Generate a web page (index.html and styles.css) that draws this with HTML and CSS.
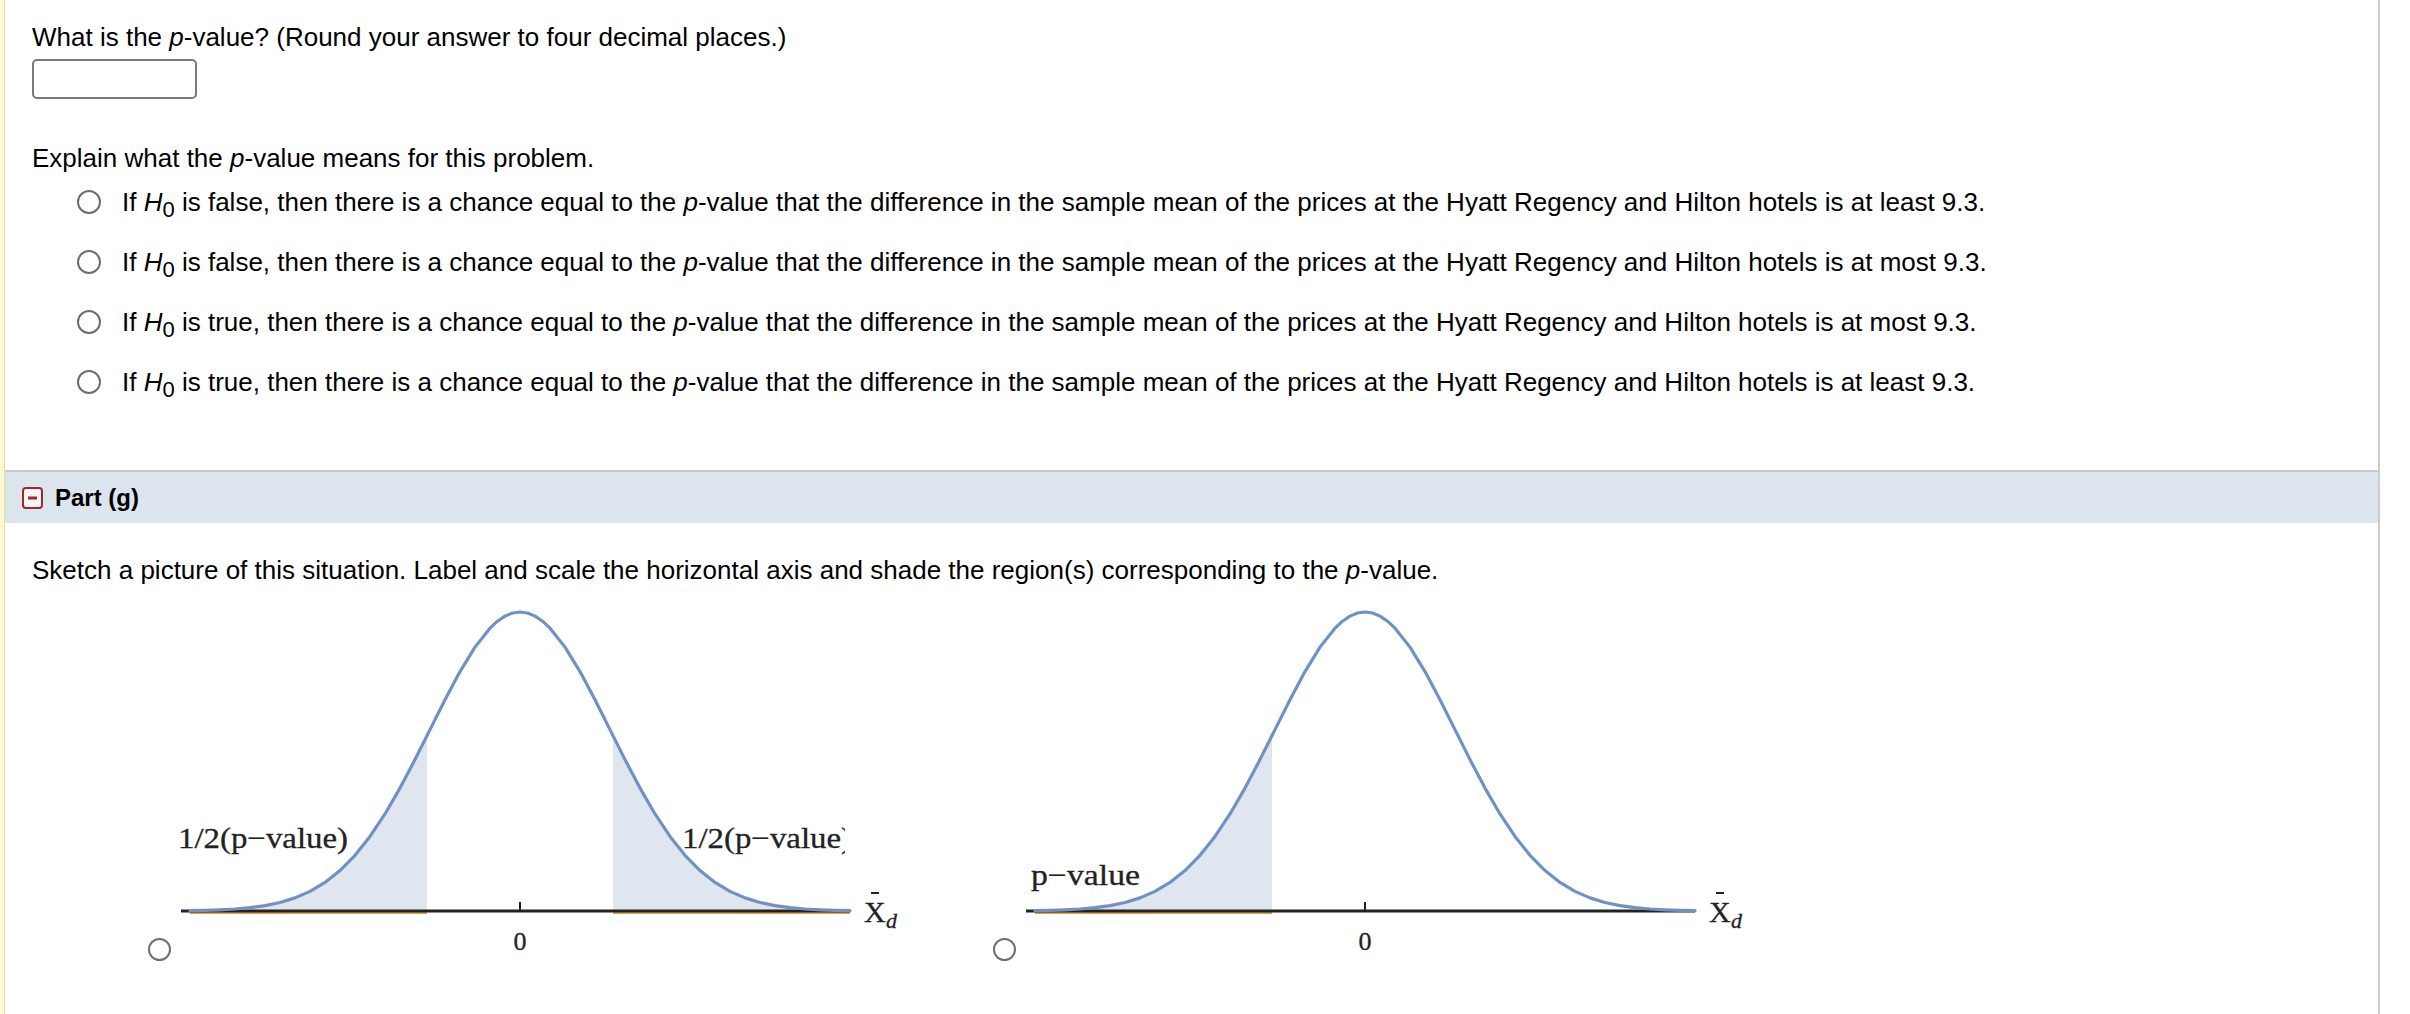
FILE: index.html
```html
<!DOCTYPE html>
<html>
<head>
<meta charset="utf-8">
<title>Part (g)</title>
<link rel="stylesheet" href="styles.css">
</head>
<body>
<div class="page">
  <div class="strip"></div>
  <div class="main">
    <div class="section">
      <p class="line">What is the <i>p</i>-value? (Round your answer to four decimal places.)</p>
      <div class="answer-box"></div>
      <p class="line explain">Explain what the <i>p</i>-value means for this problem.</p>
      <ul class="options">
        <li class="option"><span class="radio"></span><span>If <i>H</i><sub>0</sub> is false, then there is a chance equal to the <i>p</i>-value that the difference in the sample mean of the prices at the Hyatt Regency and Hilton hotels is at least 9.3.</span></li>
        <li class="option"><span class="radio"></span><span>If <i>H</i><sub>0</sub> is false, then there is a chance equal to the <i>p</i>-value that the difference in the sample mean of the prices at the Hyatt Regency and Hilton hotels is at most 9.3.</span></li>
        <li class="option"><span class="radio"></span><span>If <i>H</i><sub>0</sub> is true, then there is a chance equal to the <i>p</i>-value that the difference in the sample mean of the prices at the Hyatt Regency and Hilton hotels is at most 9.3.</span></li>
        <li class="option"><span class="radio"></span><span>If <i>H</i><sub>0</sub> is true, then there is a chance equal to the <i>p</i>-value that the difference in the sample mean of the prices at the Hyatt Regency and Hilton hotels is at least 9.3.</span></li>
      </ul>
    </div>
    <div class="part-header">
      <svg class="collapse-icon" width="21" height="22" viewBox="0 0 21 22">
        <rect x="1" y="1" width="19" height="20" rx="3" ry="3" class="ci-box"/>
        <rect x="6" y="9.5" width="9" height="3" class="ci-dash"/>
      </svg>
      <span class="part-title">Part (g)</span>
    </div>
    <div class="section2">
      <p class="line">Sketch a picture of this situation. Label and scale the horizontal axis and shade the region(s) corresponding to the <i>p</i>-value.</p>
      <div class="graphs">
        <div class="graph-opt">
          <span class="radio radio-g"></span>
          <svg class="dist" width="821" height="365" viewBox="0 0 821 365">
            <defs><clipPath id="clipR"><rect x="0" y="0" width="673" height="365"/></clipPath></defs>
            <path class="shade" d="M18,311 L18,310.64 L33,310.35 L48,309.84 L63,309.01 L78,307.68 L93,305.60 L108,302.46 L123,297.86 L138,291.35 L153,282.40 L168,270.53 L183,255.31 L198,236.44 L213,213.93 L228,188.08 L243,159.60 L255,135.69 L255,311 Z"/>
            <path class="shade" d="M441,311 L441,135.69 L453,159.60 L468,188.08 L483,213.93 L498,236.44 L513,255.31 L528,270.53 L543,282.40 L558,291.35 L573,297.86 L588,302.46 L603,305.60 L618,307.68 L633,309.01 L648,309.84 L663,310.35 L678,310.64 L678,311 Z"/>
            <line class="orange" x1="18" y1="313" x2="255" y2="313"/>
            <line class="orange" x1="441" y1="313" x2="678" y2="313"/>
            <line class="axis" x1="9" y1="311" x2="678" y2="311"/>
            <line class="tick" x1="348" y1="302" x2="348" y2="311"/>
            <path class="curve" d="M18,310.64 L33,310.35 L48,309.84 L63,309.01 L78,307.68 L93,305.60 L108,302.46 L123,297.86 L138,291.35 L153,282.40 L168,270.53 L183,255.31 L198,236.44 L213,213.93 L228,188.08 L243,159.60 L258,129.65 L273,99.70 L288,71.58 L303,47.13 L318,28.16 L325.5,21.20 L333,16.12 L340.5,13.04 L348,12 L355.5,13.04 L363,16.12 L370.5,21.20 L378,28.16 L393,47.13 L408,71.58 L423,99.70 L438,129.65 L453,159.60 L468,188.08 L483,213.93 L498,236.44 L513,255.31 L528,270.53 L543,282.40 L558,291.35 L573,297.86 L588,302.46 L603,305.60 L618,307.68 L633,309.01 L648,309.84 L663,310.35 L678,310.64"/>
            <text class="gtext" x="6" y="248" textLength="170" lengthAdjust="spacingAndGlyphs">1/2(p−value)</text>
            <text class="gtext" x="510" y="248" textLength="170" lengthAdjust="spacingAndGlyphs" clip-path="url(#clipR)">1/2(p−value)</text>
            <text class="gtext zero" x="348" y="350" text-anchor="middle">0</text>
            <line class="bar" x1="699" y1="293" x2="707" y2="293"/>
            <text class="gtext xlab" x="692" y="322">X</text>
            <text class="gtext dsub" x="714" y="328">d</text>
          </svg>
        </div>
        <div class="graph-opt">
          <span class="radio radio-g"></span>
          <svg class="dist" width="821" height="365" viewBox="0 0 821 365">
            <path class="shade" d="M18,311 L18,310.64 L33,310.35 L48,309.84 L63,309.01 L78,307.68 L93,305.60 L108,302.46 L123,297.86 L138,291.35 L153,282.40 L168,270.53 L183,255.31 L198,236.44 L213,213.93 L228,188.08 L243,159.60 L255,135.69 L255,311 Z"/>
            <line class="orange" x1="18" y1="313" x2="255" y2="313"/>
            <line class="axis" x1="9" y1="311" x2="678" y2="311"/>
            <line class="tick" x1="348" y1="302" x2="348" y2="311"/>
            <path class="curve" d="M18,310.64 L33,310.35 L48,309.84 L63,309.01 L78,307.68 L93,305.60 L108,302.46 L123,297.86 L138,291.35 L153,282.40 L168,270.53 L183,255.31 L198,236.44 L213,213.93 L228,188.08 L243,159.60 L258,129.65 L273,99.70 L288,71.58 L303,47.13 L318,28.16 L325.5,21.20 L333,16.12 L340.5,13.04 L348,12 L355.5,13.04 L363,16.12 L370.5,21.20 L378,28.16 L393,47.13 L408,71.58 L423,99.70 L438,129.65 L453,159.60 L468,188.08 L483,213.93 L498,236.44 L513,255.31 L528,270.53 L543,282.40 L558,291.35 L573,297.86 L588,302.46 L603,305.60 L618,307.68 L633,309.01 L648,309.84 L663,310.35 L678,310.64"/>
            <text class="gtext" x="14" y="285" textLength="109" lengthAdjust="spacingAndGlyphs">p−value</text>
            <text class="gtext zero" x="348" y="350" text-anchor="middle">0</text>
            <line class="bar" x1="699" y1="293" x2="707" y2="293"/>
            <text class="gtext xlab" x="692" y="322">X</text>
            <text class="gtext dsub" x="714" y="328">d</text>
          </svg>
        </div>
      </div>
    </div>
  </div>
</div>
</body>
</html>
```

FILE: styles.css
```css
html, body {
  margin: 0;
  padding: 0;
  background: #ffffff;
}

body {
  font-family: "Liberation Sans", Arial, sans-serif;
  font-size: 26px;
  color: #000000;
}

.page {
  display: flex;
  min-height: 1014px;
}

.strip {
  width: 4px;
  flex: none;
  background: #fdf9cf;
  border-right: 1px solid #e4dda0;
}

.main {
  width: 2373px;
  flex: none;
  border-right: 2px solid #cccccc;
}

.section {
  padding: 23px 0 58px 27px;
}

.line {
  margin: 0;
  line-height: 28px;
}

.answer-box {
  width: 161px;
  height: 36px;
  margin-top: 8px;
  border: 2px solid #7a7a7a;
  border-radius: 5px;
  background: #ffffff;
}

.explain {
  margin-top: 45px;
}

.options {
  list-style: none;
  margin: 0;
  padding: 0 0 0 45px;
}

.option {
  height: 60px;
  display: flex;
  align-items: center;
}

.radio {
  flex: none;
  width: 20px;
  height: 20px;
  border: 2px solid #6e6e6e;
  border-radius: 50%;
  background: #ffffff;
  margin-right: 21px;
}

sub {
  font-size: 22px;
  vertical-align: -6px;
  line-height: 0;
}

.part-header {
  height: 51px;
  border-top: 2px solid #c9c9c9;
  background: #dce5ee;
  display: flex;
  align-items: center;
  padding-left: 17px;
  font-size: 24px;
}

.collapse-icon {
  flex: none;
  margin-right: 12px;
}

.ci-box {
  fill: #fbf4f4;
  stroke: #a0282c;
  stroke-width: 2;
}

.ci-dash {
  fill: #a0282c;
}

.part-title {
  font-weight: bold;
}

.section2 {
  padding: 33px 0 0 27px;
}

.graphs {
  display: flex;
  margin-top: 16px;
  padding-left: 116px;
}

.graph-opt {
  display: flex;
  align-items: flex-end;
  width: 845px;
}

.radio-g {
  width: 19px;
  height: 19px;
  border-color: #707070;
  margin: 0 1px 4px 0;
}

.dist {
  display: block;
  flex: none;
}

.shade {
  fill: #dfe6f0;
}

.curve {
  fill: none;
  stroke: #7191c5;
  stroke-width: 3.2;
  stroke-linejoin: round;
  stroke-linecap: round;
}

.axis {
  stroke: #222222;
  stroke-width: 3;
}

.orange {
  stroke: #e2a23d;
  stroke-width: 2;
}

.tick {
  stroke: #222222;
  stroke-width: 2;
}

.bar {
  stroke: #222222;
  stroke-width: 2;
}

.gtext {
  font-family: "Liberation Serif", "Times New Roman", serif;
  font-size: 30px;
  fill: #222222;
  stroke: #222222;
  stroke-width: 0.3;
}

.zero {
  font-size: 26px;
}

.xlab {
  font-size: 30px;
}

.dsub {
  font-size: 22px;
  font-style: italic;
}
```
